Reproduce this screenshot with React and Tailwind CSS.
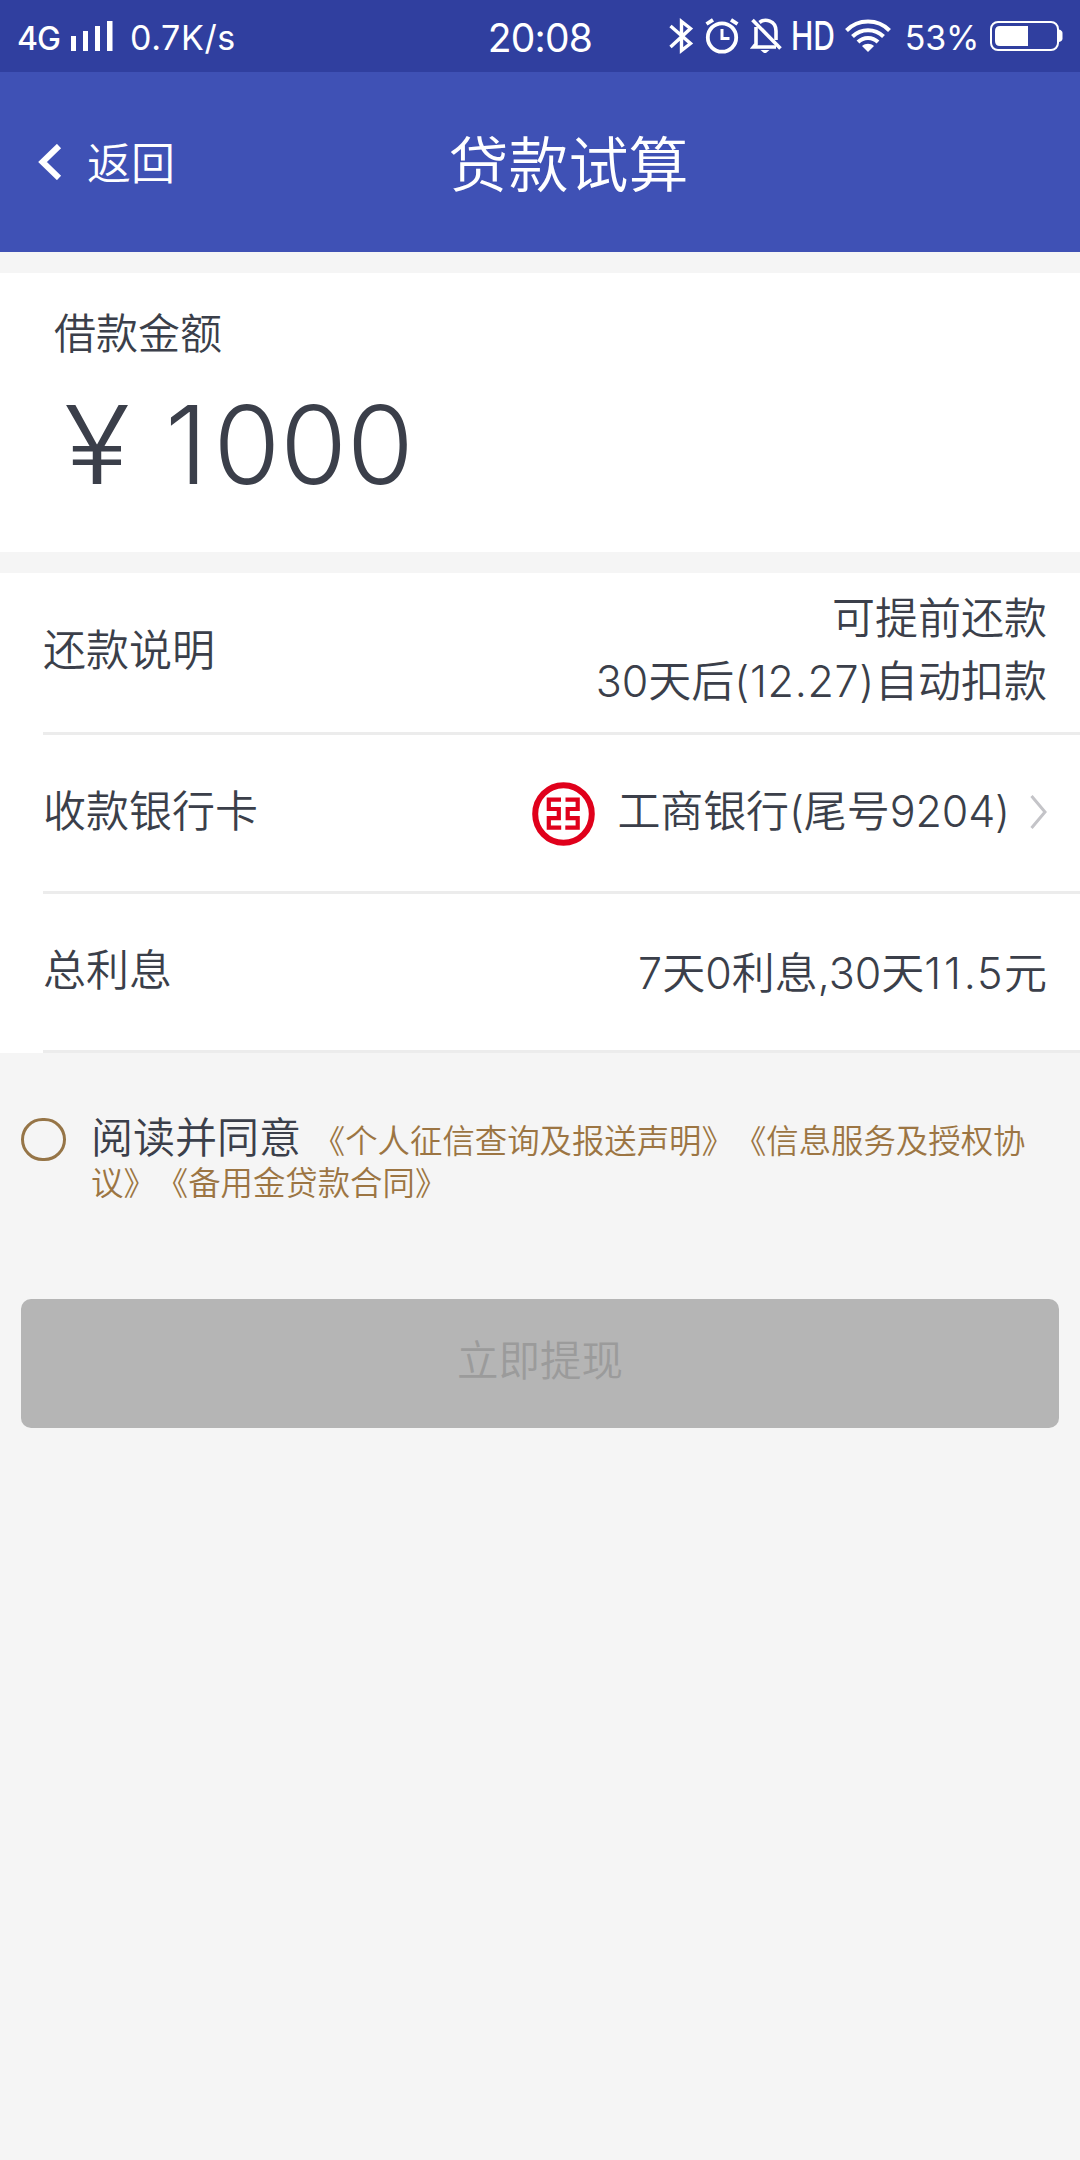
import { useState } from 'react';

const details = [
    {
        label: '还款说明',
        lines: ['可提前还款', <>30天后<span className="tracking-[0.7px]">(12.27)</span>自动扣款</>],
        pad: 'pb-[8px]',
    },
    { label: '收款银行卡', bank: '工商银行(尾号9204)', pad: 'pb-[3px]' },
    {
        label: '总利息',
        lines: [<>7天0利息,30天<span className="tracking-[2.8px]">11</span><span className="tracking-[1.6px]">.5</span>元</>],
        pad: 'pb-[4px]',
        valuePad: 'pt-[6px]',
    },
];

function SignalIcon() {
    return (
        <svg width="42" height="30" viewBox="0 0 42 30" fill="currentColor">
            <rect x="0" y="15" width="5" height="15" />
            <rect x="12" y="10" width="5" height="20" />
            <rect x="24" y="5" width="5" height="25" />
            <rect x="36" y="0" width="5.5" height="30" />
        </svg>
    );
}

function BluetoothIcon() {
    return (
        <svg width="25" height="36" viewBox="0 0 25 36" fill="none" stroke="currentColor" strokeWidth="3.4">
            <path d="M1.5 8 L21.5 25.5 L12.5 32.5 V3.5 L21.5 10.5 L1.5 29" />
        </svg>
    );
}

function AlarmIcon() {
    return (
        <svg width="34" height="36" viewBox="0 0 34 36" fill="none" stroke="currentColor" strokeWidth="3.8">
            <circle cx="17" cy="19.5" r="14.2" />
            <path d="M17 11 V20.5 H24.5" strokeWidth="3" />
            <path d="M1.5 6 L8 1.8 M26 1.8 L32.5 6" />
        </svg>
    );
}

function BellOffIcon() {
    return (
        <svg width="32" height="36" viewBox="0 0 32 36" fill="none" stroke="currentColor" strokeWidth="3.6">
            <path d="M2.5 2 L30.5 30.5" />
            <path d="M6 9 V26 L3.5 29 H26" />
            <path d="M9.5 4.5 C15 0 26 2.5 26 13 V22" />
            <path d="M10.5 32 H19.5 L16 35 H14 Z" fill="currentColor" stroke="none" />
        </svg>
    );
}

function WifiIcon() {
    return (
        <svg width="46" height="34" viewBox="0 0 46 34" fill="none" stroke="currentColor" strokeWidth="4">
            <path d="M1.5 11.5 C13 -0.5 33 -0.5 44.5 11.5" />
            <path d="M7.5 17.5 C16 9 30 9 38.5 17.5" />
            <path d="M13 23 C18.5 17.5 27.5 17.5 33 23" />
            <path d="M17 27 C20.5 24 25.5 24 29 27 L23 33 Z" fill="currentColor" stroke="none" />
        </svg>
    );
}

function BatteryIcon() {
    return (
        <svg width="73" height="32" viewBox="0 0 73 32">
            <rect x="1" y="2" width="67" height="28" rx="7" fill="none" stroke="currentColor" strokeWidth="2" />
            <path d="M10 6 H38 V26 H10 Q5 26 5 21 V11 Q5 6 10 6 Z" fill="currentColor" />
            <path d="M69 9.5 Q72.5 10.5 72.5 13 V18.5 Q72.5 21 69 22 Z" fill="currentColor" />
        </svg>
    );
}

function BankLogo() {
    return (
        <svg width="63" height="64" viewBox="0 0 63 64" fill="none" stroke="#e0001b">
            <ellipse cx="31.5" cy="32" rx="28.3" ry="28.8" strokeWidth="6" />
            <g strokeWidth="4.2">
                <path d="M29 17.6 H16.8 V27 H26.8 V36.2 H16.8 V45.6 H29.2" />
                <path d="M33.5 17.6 H45.7 V27 H35.7 V36.2 H45.7 V45.6 H33.3" />
            </g>
        </svg>
    );
}

function StatusBar() {
    return (
        <div className="grid h-[72px] grid-cols-[1fr_auto_1fr] items-center bg-[#303f9f] pl-[17px] pr-[17px] font-['Inter',sans-serif] font-normal text-white">
            <div className="flex items-center">
                <span className="mt-[6px] w-[54px] text-[32px] font-medium leading-[32px] tracking-[-1px]">4G</span>
                <SignalIcon />
                <span className="ml-[17px] mt-[3px] text-[34px] leading-[34px] tracking-[0.6px]">0.7K/s</span>
            </div>
            <span className="mt-[2px] text-[39px] leading-[39px] tracking-[-0.8px]">20:08</span>
            <div className="flex items-center justify-end">
                <BluetoothIcon />
                <span className="ml-[11px]"><AlarmIcon /></span>
                <span className="ml-[11px]"><BellOffIcon /></span>
                <span className="ml-[9px] w-[45px]">
                    <span className="inline-block origin-left scale-x-[0.77] text-[39px] font-medium leading-[39px]">HD</span>
                </span>
                <span className="ml-[9px]"><WifiIcon /></span>
                <span className="ml-[14px] mt-[3px] text-[34px] leading-[34px] tracking-[-0.3px]">53%</span>
                <span className="ml-[11px]"><BatteryIcon /></span>
            </div>
        </div>
    );
}

function Header() {
    return (
        <div className="grid h-[180px] grid-cols-[1fr_auto_1fr] items-center bg-[#3f51b5] px-[38px] text-white">
            <button className="flex items-center text-left text-[44px] leading-[60px]">
                <svg width="24" height="36" viewBox="0 0 24 36" fill="none" stroke="currentColor" strokeWidth="6">
                    <path d="M21 2 L4.5 18 L21 34" />
                </svg>
                <span className="ml-[25px] mt-[4px]">返回</span>
            </button>
            <h1 className="ml-[57px] mt-[6px] text-[60px] leading-[84px]">贷款试算</h1>
        </div>
    );
}

function DetailRow({ label, lines, bank, pad, valuePad }) {
    return (
        <div className={`flex h-[159px] items-center justify-between border-b-[3px] border-[#ececec] pr-[33px] text-[43px] ${pad}`}>
            <span>{label}</span>
            {bank ? (
                <div className="flex items-center">
                    <span className="mt-[4px]"><BankLogo /></span>
                    <span className="ml-[22px] tracking-[-0.1px]">{bank}</span>
                    <svg className="ml-[20px]" width="17" height="36" viewBox="0 0 17 36" fill="none" stroke="#c4c4c8" strokeWidth="3">
                        <path d="M1.5 2 L15 18 L1.5 34" />
                    </svg>
                </div>
            ) : (
                <div className={`text-right leading-[63px] ${valuePad || ''}`}>
                    {lines.map((line, i) => <p key={i}>{line}</p>)}
                </div>
            )}
        </div>
    );
}

export default function App() {
    const [agreed, setAgreed] = useState(false);

    return (
        <div className="min-h-[2160px] w-[1080px] bg-[#f5f5f5] font-['Inter','Noto_Sans_CJK_SC',sans-serif] font-[350] text-[#3b3f4a]">
            <StatusBar />
            <Header />

            <section className="mt-[21px] h-[279px] bg-white px-[54px] pt-[31px]">
                <p className="text-[42px] leading-[60px]">借款金额</p>
                <p className="mt-[21px] flex text-[108px] leading-[120px]">
                    <span className="ml-[10px] w-[101px] origin-left scale-x-[1.13]">¥</span>
                    <span><span className="tracking-[6px]">1</span>000</span>
                </p>
            </section>

            <section className="mt-[21px] bg-white pl-[43px] pt-[3px]">
                {details.map((item) => <DetailRow key={item.label} {...item} />)}
            </section>

            <div className="mt-[63px] flex items-start pl-[21px]">
                <button
                    aria-label="同意协议"
                    onClick={() => setAgreed(!agreed)}
                    className="mt-[2px] h-[43px] w-[45px] shrink-0 rounded-full border-[3px] border-[#967547]"
                />
                <p className="ml-[25px] mt-[1px] whitespace-nowrap text-[32.4px] leading-[42px] text-[#9c7543] [text-spacing-trim:space-all]">
                    <span className="text-[42px] text-[#3b3f4a]">阅读并同意 </span>
                    《个人征信查询及报送声明》《信息服务及授权协
                    <br />
                    议》《备用金贷款合同》
                </p>
            </div>

            <button
                disabled={!agreed}
                className="mx-[21px] mt-[94px] flex h-[129px] w-[1038px] items-center justify-center rounded-[10px] bg-[#b5b5b5] pb-[4px] text-[41.5px] text-[#9b9b9b]"
            >
                立即提现
            </button>
        </div>
    );
}
